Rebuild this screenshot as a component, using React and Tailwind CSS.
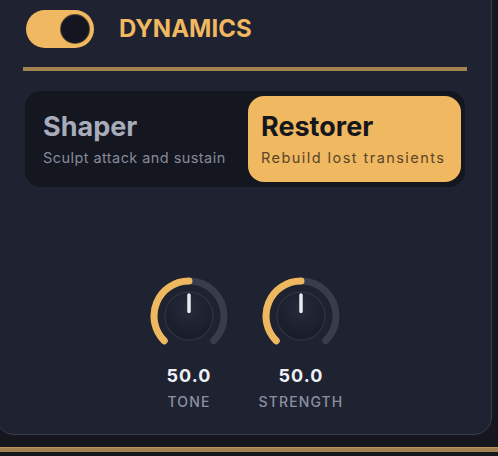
import React from 'react';

const Knob = ({ value, label }) => {
  return (
    <div className="w-[92px] flex flex-col items-center">
      <svg width="80" height="80" viewBox="0 0 80 80">
        <defs>
          <radialGradient id={`kg-${label}`} cx="50%" cy="35%" r="70%">
            <stop offset="0%" stopColor="#262a3a" />
            <stop offset="100%" stopColor="#181a26" />
          </radialGradient>
        </defs>
        {/* track */}
        <path d="M 15.25 64.75 A 35 35 0 1 1 64.75 64.75" fill="none" stroke="#393c4b" strokeWidth="7" strokeLinecap="round" />
        {/* value arc */}
        <path d="M 15.25 64.75 A 35 35 0 0 1 40 5" fill="none" stroke="#efb75e" strokeWidth="7" strokeLinecap="round" />
        <circle cx="40" cy="40" r="24" fill={`url(#kg-${label})`} stroke="#2d3040" strokeWidth="1.5" />
        <line x1="40" y1="19" x2="40" y2="35.5" stroke="#e9ebf2" strokeWidth="3.5" strokeLinecap="round" />
      </svg>
      <div className="mt-[9px] text-[18px] leading-[22px] font-bold tracking-[0.06em] text-[#eef0f6]">{value}</div>
      <div className="mt-[6px] text-[14px] leading-[18px] font-medium tracking-[0.08em] text-[#8b90a0]">{label}</div>
    </div>
  );
};

export default function App() {
  return (
    <div className="w-[498px] h-[456px] bg-[#15161e] overflow-hidden flex flex-col font-['Inter','Liberation_Sans',sans-serif]">
      {/* Panel */}
      <div className="-ml-1 -mt-5 w-[496px] h-[455px] shrink-0 rounded-[18px] border border-[#383b4b] bg-[#1f2231] pt-[29px] pl-[26px] pr-[24px] flex flex-col">
        {/* Header */}
        <div className="flex items-center gap-[25px] pl-[3px]">
          <button className="w-[68px] h-[38px] rounded-full bg-[#f0b860] flex items-center justify-end pr-1">
            <span className="w-[30px] h-[30px] rounded-full bg-[#131521] border border-[#c99a4f]/40" />
          </button>
          <h2 className="text-[24px] font-bold text-[#f0b860]">DYNAMICS</h2>
        </div>

        <div className="mt-[19px] h-[4px] w-[444px] bg-[#a3834f]" />

        {/* Mode switch */}
        <div className="mt-[20px] mx-[2px] w-[440px] h-[96px] rounded-[16px] bg-[#141620] py-[5px] pl-[5px] pr-[4px] grid grid-cols-[218px_1fr]">
          <div className="rounded-[16px] px-[13px] flex flex-col justify-center">
            <div className="text-[27px] leading-[31px] font-bold text-[#a7acbb]">Shaper</div>
            <div className="mt-[7px] text-[14.5px] leading-[18px] tracking-[0.03em] text-[#878b99] whitespace-nowrap">Sculpt attack and sustain</div>
          </div>
          <div className="rounded-[16px] px-[13px] bg-[#f0b860] flex flex-col justify-center">
            <div className="text-[27px] leading-[31px] font-bold text-[#16171d]">Restorer</div>
            <div className="mt-[7px] text-[14.5px] leading-[18px] tracking-[0.1em] text-[#59452a] whitespace-nowrap">Rebuild lost transients</div>
          </div>
        </div>

        {/* Knobs */}
        <div className="mt-[89px] flex justify-center gap-[20px]">
          <Knob value="50.0" label="TONE" />
          <Knob value="50.0" label="STRENGTH" />
        </div>
      </div>

      <div className="mt-[12px] h-[5px] shrink-0 bg-[#a08150] border-t border-[#b8935a]" />
    </div>
  );
}
